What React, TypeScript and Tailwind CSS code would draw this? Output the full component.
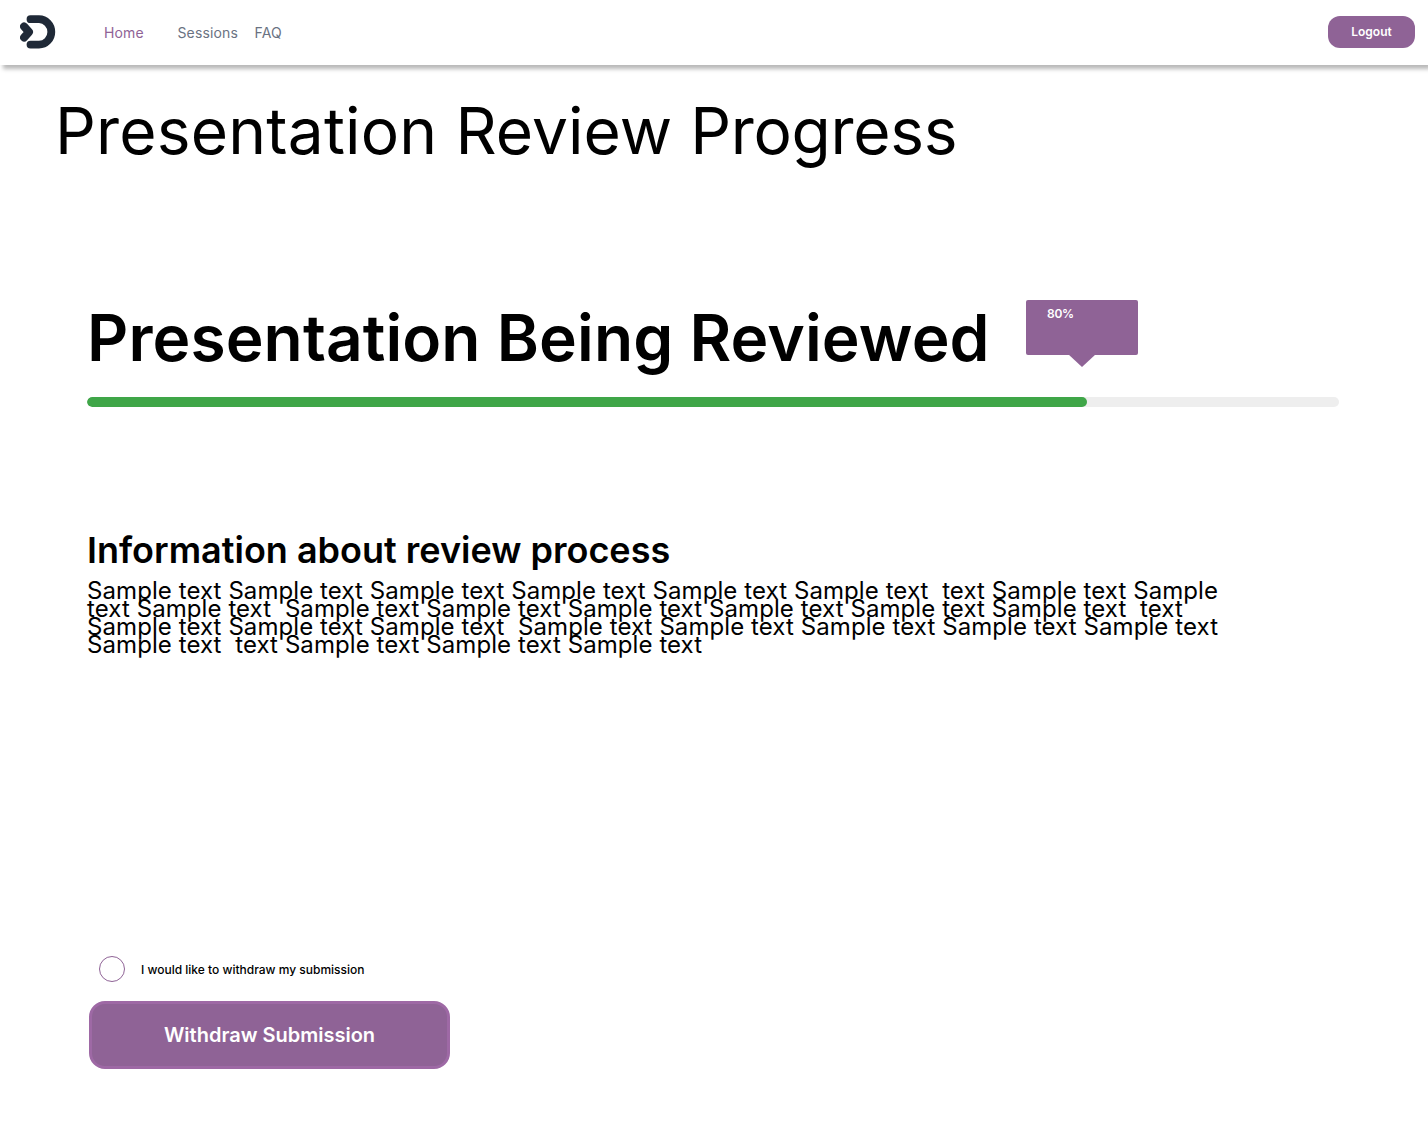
const lines = [
  "Sample text Sample text Sample text Sample text Sample text Sample text  text Sample text Sample",
  "text Sample text  Sample text Sample text Sample text Sample text Sample text Sample text  text",
  "Sample text Sample text Sample text  Sample text Sample text Sample text Sample text Sample text",
  "Sample text  text Sample text Sample text Sample text",
];

function Logo() {
  return (
    <svg className="mb-px" width="36" height="34" viewBox="0 0 36 34" fill="none">
      <path d="M10.500 4.200H19A12.300 12.700 0 0 1 19 29.600H10.500" stroke="#1f2937" strokeWidth="7.800" strokeLinecap="round" strokeLinejoin="round" />
      <path d="M4.100 11.500L9 17L4.100 22.500" stroke="#1f2937" strokeWidth="8" strokeLinecap="round" strokeLinejoin="round" />
    </svg>
  );
}

function Header() {
  return (
    <header className="flex h-[65px] items-center bg-white pl-5 pr-[13px] shadow-[3px_4px_4px_rgba(0,0,0,0.28)]">
      <Logo />
      <nav className="ml-12 flex text-[14px] font-normal leading-5 tracking-[0.14px] text-gray-500">
        <a className="w-[73.500px] text-[#8f6396]">Home</a>
        <a className="w-[77px]">Sessions</a>
        <a>FAQ</a>
      </nav>
      <button className="mb-px ml-auto h-8 w-[87px] rounded-xl bg-[#8f6396] pb-px text-[12px] font-semibold text-white">Logout</button>
    </header>
  );
}

export default function App() {
  return (
    <div className="h-[1133px] overflow-hidden bg-white font-['Inter',sans-serif] text-black">
      <Header />
      <main>
        <h1 className="ml-[55px] mt-[26px] whitespace-nowrap text-[64px] leading-[80px]"><span className="tracking-[0.2px]">Presentation </span><span className="tracking-[0.05px]">Review </span><span className="tracking-[-0.3px]">Progress</span></h1>
        <section className="ml-[87px] mt-[127px] w-[1252px]">
          <div className="flex h-[99px]">
            <h2 className="w-[939px] whitespace-nowrap text-[64px] font-semibold leading-[80px] tracking-[0.1px]">Presentation Being Reviewed</h2>
            <div className="mt-[2px]">
              <div className="h-[55px] w-28 rounded-[2px] bg-[#8f6396] pl-[21px] pt-[5px] text-[12px] font-semibold leading-[18px] tracking-[-0.3px] text-white">80%</div>
              <svg className="mx-auto block" width="28" height="12" viewBox="0 0 28 12"><path d="M0 -1H28L14 12Z" fill="#8f6396" /></svg>
            </div>
          </div>
          <div className="h-[10px] overflow-hidden rounded-full bg-[#eeeeee]"><div className="h-full w-[1000px] rounded-full bg-[#3fa648]" /></div>
        </section>
        <section className="ml-[87px] mt-[119px]">
          <h3 className="whitespace-nowrap text-[36px] font-semibold leading-[48px]">Information about review process</h3>
          <div className="mt-[8px] whitespace-pre text-[24px] leading-[18px] tracking-[0.083px]">
            {lines.map((line) => <p key={line}>{line}</p>)}
          </div>
        </section>
        <label className="ml-[99px] mt-[302px] flex h-[26px] items-center gap-4 text-[12px] font-medium">
          <span className="size-[26px] rounded-full border border-[#8f6396]" />
          <span className="pt-[2px]">I would like to withdraw my submission</span>
        </label>
        <button className="ml-[89px] mt-[19px] block h-[68px] w-[361px] rounded-2xl border-3 border-[#9e69a5] bg-[#8f6396] text-[20px] font-semibold text-white">Withdraw Submission</button>
      </main>
    </div>
  );
}
